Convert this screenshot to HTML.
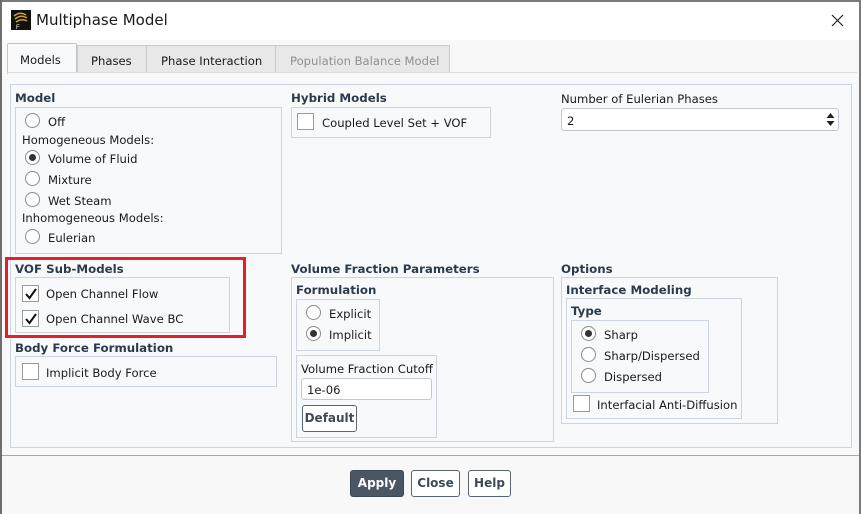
<!DOCTYPE html>
<html><head><meta charset="utf-8"><style>
*{margin:0;padding:0;box-sizing:border-box}
body{width:861px;height:514px;overflow:hidden;background:#f8f8f8;font-family:"DejaVu Sans","Liberation Sans",sans-serif;font-size:11.6px;color:#1a1a1a;position:relative}
.a{position:absolute;white-space:nowrap}
.box{position:absolute;border:1px solid #ccd4df}
.lb{position:absolute;font-weight:bold;color:#2b3a4c;font-size:11.8px;white-space:nowrap}
.t{position:absolute;white-space:nowrap;line-height:14px}
.r{position:absolute;width:15px;height:15px;border:1px solid #8a8a8a;border-radius:50%;background:#fff}
.r.on::after{content:"";position:absolute;left:3px;top:3px;width:7px;height:7px;border-radius:50%;background:#333}
.c{position:absolute;width:17px;height:17px;border:1px solid #9a9a9a;background:#fff}
.c svg{position:absolute;left:1px;top:1px}
.in{position:absolute;background:#fff;border:1px solid #c2c8d0;border-radius:3px}
.btn{position:absolute;border:1px solid #5b6572;border-radius:3px;background:#fff;font-weight:bold;color:#3e4a58;text-align:center;font-size:12px}
</style></head><body>
<div class="a" style="left:0;top:0;width:861px;height:2px;background:#7a7a7a"></div>
<div class="a" style="left:0;top:0;width:2px;height:514px;background:#6e6e6e"></div>
<div class="a" style="left:859px;top:0;width:2px;height:514px;background:#7a7a7a"></div>
<div class="a" style="left:2px;top:2px;width:857px;height:38px;background:#fff"></div>
<div class="a" style="left:11px;top:10px;width:20px;height:20px;background:#111"><svg width="20" height="20"><path d="M3 6 Q9 1 15 5 M4 9 Q10 4 16 8 M5 12 Q11 8 16 11" stroke="#d4a030" stroke-width="1.5" fill="none"/><text x="5" y="19" font-size="6" fill="#fff" font-family="Liberation Sans">F</text></svg></div>
<div class="t" style="left:36px;top:11px;font-size:15px;line-height:18px">Multiphase Model</div>
<svg class="a" style="left:831px;top:14px" width="13" height="13"><path d="M1 1L12 12M12 1L1 12" stroke="#222" stroke-width="1.2"/></svg>
<div class="a" style="left:77px;top:45px;width:70px;height:28px;background:#e8e8e8;border:1px solid #cbcbcb"></div>
<div class="a" style="left:146px;top:45px;width:130px;height:28px;background:#e8e8e8;border:1px solid #cbcbcb"></div>
<div class="a" style="left:275px;top:45px;width:175px;height:28px;background:#e8e8e8;border:1px solid #cbcbcb"></div>
<div class="a" style="left:7px;top:43px;width:70px;height:31px;background:#f8f9fa;border:1px solid #c4c4c4;border-bottom:none;border-radius:2px 2px 0 0"></div>
<div class="a" style="left:7px;top:72px;width:850px;height:1px;background:#dcdcdc"></div>
<div class="a" style="left:8px;top:73px;width:849px;height:382px;background:#f8f9fa"></div>
<div class="t" style="left:20px;top:53px">Models</div>
<div class="t" style="left:91px;top:54px">Phases</div>
<div class="t" style="left:161px;top:54px">Phase Interaction</div>
<div class="t" style="left:290px;top:54px;color:#909090">Population Balance Model</div>
<div class="box" style="left:10px;top:84px;width:842px;height:364px"></div>
<div class="lb" style="left:15px;top:91px">Model</div>
<div class="box" style="left:15px;top:107px;width:267px;height:147px"></div>
<div class="r" style="left:25px;top:113px"></div><div class="t" style="left:48px;top:115px">Off</div>
<div class="t" style="left:22px;top:133px">Homogeneous Models:</div>
<div class="r on" style="left:25px;top:150px"></div><div class="t" style="left:48px;top:152px">Volume of Fluid</div>
<div class="r" style="left:25px;top:171px"></div><div class="t" style="left:48px;top:173px">Mixture</div>
<div class="r" style="left:25px;top:192px"></div><div class="t" style="left:48px;top:194px">Wet Steam</div>
<div class="t" style="left:22px;top:211px">Inhomogeneous Models:</div>
<div class="r" style="left:25px;top:229px"></div><div class="t" style="left:48px;top:231px">Eulerian</div>
<div class="lb" style="left:291px;top:91px">Hybrid Models</div>
<div class="box" style="left:291px;top:107px;width:200px;height:31px"></div>
<div class="c" style="left:297px;top:113px"></div><div class="t" style="left:322px;top:116px">Coupled Level Set + VOF</div>
<div class="t" style="left:561px;top:92px">Number of Eulerian Phases</div>
<div class="in" style="left:561px;top:108px;width:278px;height:23px"></div>
<div class="t" style="left:567px;top:114px">2</div>
<svg class="a" style="left:826px;top:111px" width="9" height="17"><path d="M0.5 7L4.5 2L8.5 7ZM0.5 10L4.5 15L8.5 10Z" fill="#222"/></svg>
<div class="lb" style="left:15px;top:262px">VOF Sub-Models</div>
<div class="box" style="left:15px;top:277px;width:215px;height:56px"></div>
<div class="c" style="left:22px;top:285px"><svg width="14" height="14"><path d="M2 7L5.5 11L12 2" stroke="#111" stroke-width="2" fill="none"/></svg></div>
<div class="t" style="left:46px;top:287px">Open Channel Flow</div>
<div class="c" style="left:22px;top:310px"><svg width="14" height="14"><path d="M2 7L5.5 11L12 2" stroke="#111" stroke-width="2" fill="none"/></svg></div>
<div class="t" style="left:46px;top:312px">Open Channel Wave BC</div>
<div class="a" style="left:5px;top:257px;width:241px;height:81px;border:3px solid #e3202a"></div>
<div class="lb" style="left:15px;top:341px">Body Force Formulation</div>
<div class="box" style="left:15px;top:356px;width:262px;height:31px"></div>
<div class="c" style="left:22px;top:363px"></div><div class="t" style="left:46px;top:366px">Implicit Body Force</div>
<div class="lb" style="left:291px;top:262px">Volume Fraction Parameters</div>
<div class="box" style="left:291px;top:277px;width:263px;height:165px"></div>
<div class="lb" style="left:296px;top:283px">Formulation</div>
<div class="box" style="left:296px;top:299px;width:84px;height:52px"></div>
<div class="r" style="left:306px;top:305px"></div><div class="t" style="left:329px;top:307px">Explicit</div>
<div class="r on" style="left:306px;top:326px"></div><div class="t" style="left:329px;top:328px">Implicit</div>
<div class="box" style="left:296px;top:355px;width:141px;height:83px"></div>
<div class="t" style="left:301px;top:362px">Volume Fraction Cutoff</div>
<div class="in" style="left:301px;top:378px;width:131px;height:22px"></div>
<div class="t" style="left:307px;top:383px">1e-06</div>
<div class="btn" style="left:302px;top:405px;width:55px;height:27px;line-height:25px">Default</div>
<div class="lb" style="left:561px;top:262px">Options</div>
<div class="box" style="left:561px;top:277px;width:217px;height:147px"></div>
<div class="lb" style="left:566px;top:283px">Interface Modeling</div>
<div class="box" style="left:566px;top:298px;width:176px;height:121px"></div>
<div class="lb" style="left:571px;top:304px">Type</div>
<div class="box" style="left:571px;top:320px;width:138px;height:73px"></div>
<div class="r on" style="left:581px;top:326px"></div><div class="t" style="left:604px;top:328px">Sharp</div>
<div class="r" style="left:581px;top:347px"></div><div class="t" style="left:604px;top:349px">Sharp/Dispersed</div>
<div class="r" style="left:581px;top:368px"></div><div class="t" style="left:604px;top:370px">Dispersed</div>
<div class="c" style="left:573px;top:395px"></div><div class="t" style="left:597px;top:398px">Interfacial Anti-Diffusion</div>
<div class="a" style="left:2px;top:455px;width:857px;height:1px;background:#a8a8a8"></div>
<div class="btn" style="left:350px;top:470px;width:54px;height:27px;line-height:25px;background:#4b5665;color:#fff;border-color:#3e4855">Apply</div>
<div class="btn" style="left:411px;top:470px;width:49px;height:27px;line-height:25px">Close</div>
<div class="btn" style="left:468px;top:470px;width:43px;height:27px;line-height:25px">Help</div>
</body></html>
